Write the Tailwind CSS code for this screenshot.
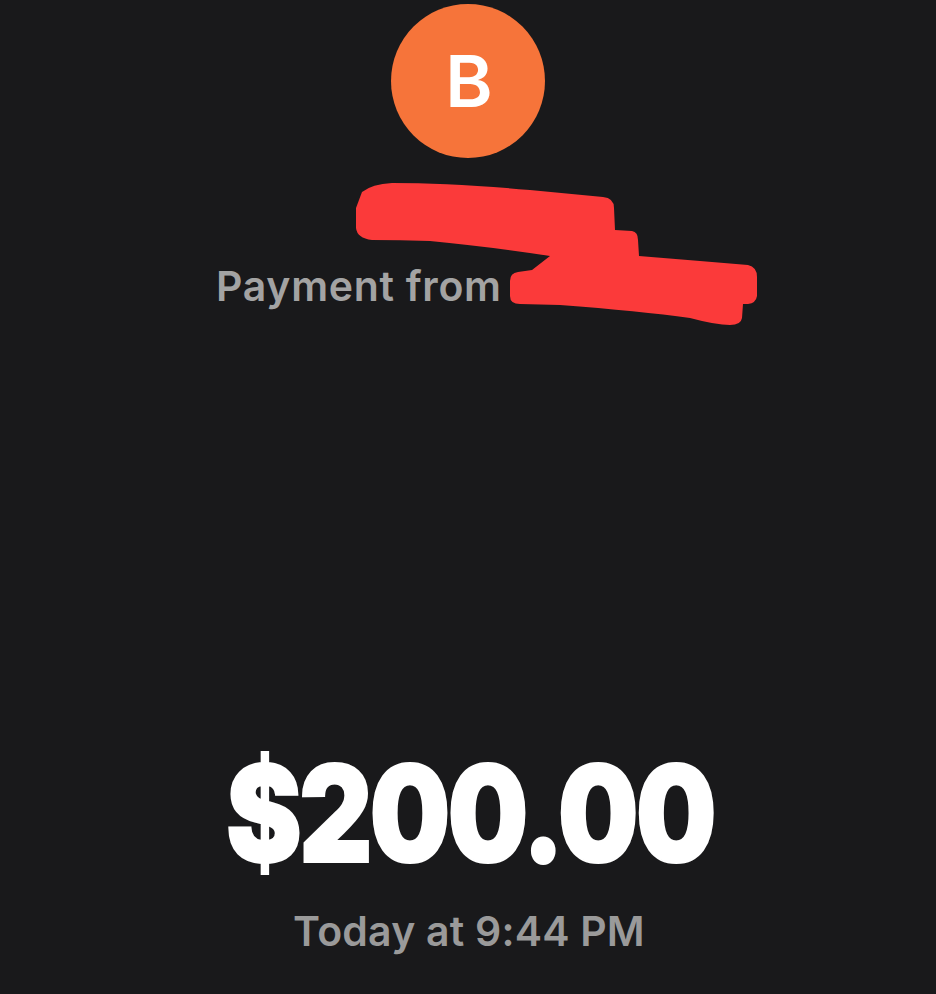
<!DOCTYPE html>
<html>
<head>
<meta charset="utf-8">
<script src="https://cdn.jsdelivr.net/npm/@tailwindcss/browser@4"></script>
</head>
<body class="bg-[#19191b]">
<main class="relative w-[936px] h-[994px] overflow-hidden bg-[#19191b] font-['Inter',sans-serif]">
  <div class="flex flex-col items-center pt-[4px]">
    <div class="w-[154px] h-[154px] pl-[2px] rounded-full bg-[#f6743a] flex items-center justify-center text-white text-[72px] font-semibold leading-none">B</div>
    <div class="self-start ml-[216px] mt-[104px] text-[41px] leading-[48px] font-semibold text-[#a3a3a3] tracking-[0.7px] whitespace-nowrap">Payment from</div>
    <div class="mt-[419px] ml-[4px] text-[134px] leading-[168px] font-black text-white tracking-[-3.5px] whitespace-nowrap scale-x-[0.85] [-webkit-text-stroke:2px_white]">$200.00</div>
    <div class="mt-[10px] ml-[2px] text-[41px] leading-[48px] font-semibold text-[#9a9a9a] tracking-[0.2px] whitespace-nowrap">Today at 9:44 PM</div>
  </div>
  <svg class="absolute left-0 top-0" width="936" height="994" viewBox="0 0 936 994" aria-hidden="true">
    <path fill="#fb3a3a" d="M362 192 Q372 184 392 183 Q450 183 530 190 L603 197 Q614 198 614 208 L615 230 L632 231 Q638 232 638 240 L639 256 L700 261 L748 265 Q757 267 757 277 L757 296 Q756 303 748 304 L743 304 L742 318 Q741 325 730 325 Q716 325 690 318 Q640 311 560 305 L520 304 Q510 304 510 296 L510 281 Q510 273 518 272 L532 270 L550 256 Q500 248 430 241 Q400 240 372 240 Q357 238 356 228 L356 208 Z"/>
  </svg>
</main>
</body>
</html>
